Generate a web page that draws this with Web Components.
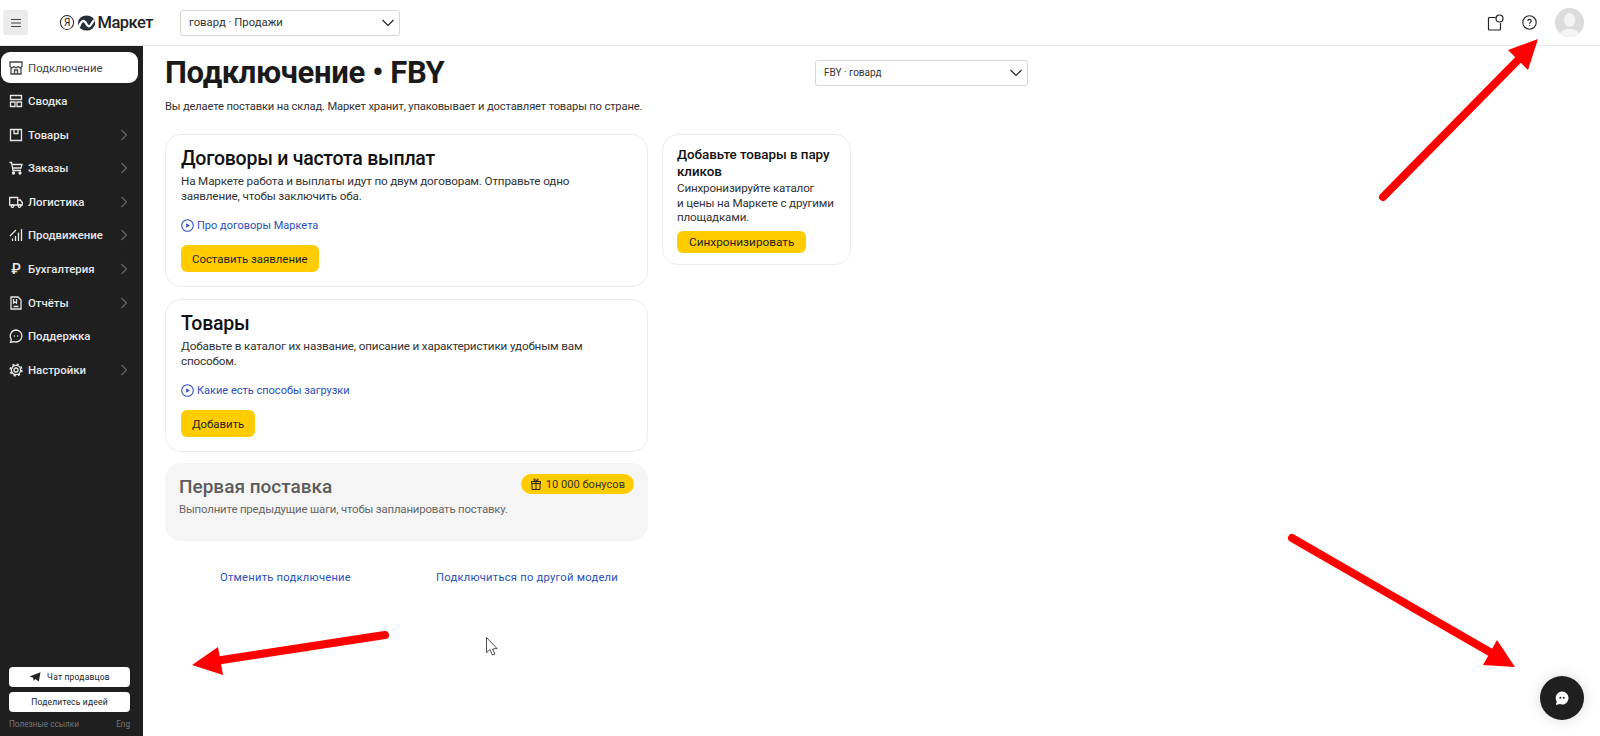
<!DOCTYPE html>
<html lang="ru">
<head>
<meta charset="utf-8">
<title>Подключение • FBY</title>
<style>
  html, body { margin: 0; height: 100%; }
  body { font-family: Roboto, "Liberation Sans", sans-serif; color: #1f1f1f; background: #fff; overflow: hidden; }
  .shell { display: flex; height: 690px; }
  .ic { display: block; width: 14px; height: 14px; fill: none; stroke: currentColor; stroke-width: 1.3; }
</style>
</head>
<body>
<script>
const define = (name, markup) => customElements.define(name, class extends HTMLElement {
  constructor() {
    super()
    this.attachShadow({ mode: 'open' })
    this.shadowRoot.innerHTML = markup
  }
})

define('y-select', `
<style>
  :host { display: block; box-sizing: border-box; height: 26px; border: 1px solid #d6d6d6; border-radius: 3px; background: #fff; }
  div { display: flex; align-items: center; justify-content: space-between; height: 100%; padding: 0 4px 0 8px; font-size: var(--select-size, 10px); color: #333; }
</style>
<div><slot></slot><svg width="14" height="14" viewBox="0 0 14 14" fill="none" stroke="#222" stroke-width="1.2"><path d="M1.5 4 7 9.5 12.5 4"/></svg></div>`)

define('y-logo', `
<style>
  :host { display: flex; align-items: center; width: 93px; }
  .ya { box-sizing: border-box; width: 15px; height: 15px; border: 1.2px solid #222; border-radius: 50%; font-size: 10px; line-height: 13px; text-align: center; color: #222; margin-right: 4px; }
  b { font-size: 16.5px; font-weight: 500; color: #222; margin-left: 2px; letter-spacing: -.5px; }
  svg { display: block; }
</style>
<span class="ya">Я</span>
<svg width="18" height="16" viewBox="0 0 18 16"><ellipse cx="9" cy="8" rx="9" ry="8" fill="#26303a"/><path d="M1 12.5C3 6 5.5 4.5 7.5 7s3 5.5 5 4 2.5-4.5 4.5-6" fill="none" stroke="#fff" stroke-width="2.4"/></svg>
<b>Маркет</b>`)

define('app-header', `
<style>
  :host { display: flex; align-items: center; box-sizing: border-box; height: 46px; padding: 0 16px 0 3px; border-bottom: 1px solid #e9e9e9; --select-size: 11.3px; }
  .burger { display: flex; align-items: center; justify-content: center; width: 25px; height: 25px; border-radius: 3px; background: #ebebeb; margin-right: 32px; }
  y-logo { margin-right: 27px; }
  y-select { width: 220px; }
  .tools { display: flex; align-items: center; margin-left: auto; }
  .tools svg { display: block; }
  .ava { width: 29px; height: 29px; margin-left: 18px; border-radius: 50%; overflow: hidden; }
</style>
<div class="burger"><svg width="12" height="10" viewBox="0 0 12 10" stroke="#444" stroke-width="1.2"><path d="M1 1.5h10M1 5h10M1 8.5h10"/></svg></div>
<y-logo></y-logo>
<y-select>говард · Продажи</y-select>
<div class="tools">
  <svg style="margin-right:18px" width="17" height="17" viewBox="0 0 17 17" fill="none" stroke="#222" stroke-width="1.2"><path d="M8.5 3.5H2.5a1 1 0 0 0-1 1V15a1 1 0 0 0 1 1H12.500a1 1 0 0 0 1-1V9"/><circle cx="12.500" cy="4.500" r="3.500"/></svg>
  <svg width="15" height="15" viewBox="0 0 15 15" fill="none" stroke="#222" stroke-width="1.1"><circle cx="7.5" cy="7.5" r="6.7"/><path d="M5.800 6c0-2.200 3.500-2.200 3.500 0 0 1.300-1.700 1.300-1.700 2.700"/><path d="M7.600 10v1.100"/></svg>
  <svg class="ava" viewBox="0 0 29 29"><rect width="29" height="29" fill="#dcdcdc"/><ellipse cx="14.5" cy="12" rx="5.5" ry="7" fill="#f4f4f4"/><path d="M4 29c1-7 6-8 10.500-8S24 22 25 29z" fill="#f4f4f4"/></svg>
</div>`)

define('nav-item', `
<style>
  :host { display: flex; align-items: center; box-sizing: border-box; height: 31px; padding: 0 15px 0 9px; color: #e8e8e8; font-size: 11.4px; font-weight: 500; }
  :host([active]) { background: #fff; color: #444; font-weight: 400; margin: 0 5px 0 1px; padding: 0 8px; border-radius: 9px; }
  .i { display: flex; width: 14px; height: 14px; margin-right: 5px; justify-content: center; align-items: center; font-size: 14px; }
  .t { flex: 1; }
  svg { display: none; }
  :host([arrow]) svg { display: block; }
</style>
<span class="i"><slot name="icon"></slot></span><span class="t"><slot></slot></span>
<svg width="8" height="12" viewBox="0 0 8 12" fill="none" stroke="#6a6a6a" stroke-width="1.1"><path d="M1.5 1 6.5 6 1.5 11"/></svg>`)

define('side-nav', `
<style>
  :host { display: flex; flex-direction: column; box-sizing: border-box; flex: none; width: 143px; padding-top: 6px; background: #1f1f1f; }
  .items { display: flex; flex-direction: column; gap: 2.6px; }
  .bottom { display: flex; flex-direction: column; margin-top: auto; padding: 0 13px 3px 9px; gap: 5px; }
  .btn { display: flex; align-items: center; justify-content: center; gap: 6px; height: 20px; border-radius: 4px; background: #fff; color: #222; font-size: 8.5px; letter-spacing: .2px; }
  .foot { display: flex; justify-content: space-between; margin-top: -2px; font-size: 8.2px; line-height: 18px; color: #777; }
</style>
<div class="items"><slot></slot></div>
<div class="bottom">
  <div class="btn"><svg width="12" height="10" viewBox="0 0 12 10"><path d="M11.5.3 9.8 9.5 6.3 7 4.5 8.800l-.3-3L.5 4.500z" fill="#222"/></svg>Чат продавцов</div>
  <div class="btn">Поделитесь идеей</div>
  <div class="foot"><span>Полезные ссылки</span><span>Eng</span></div>
</div>`)

define('play-link', `
<style>
  :host { display: flex; align-items: center; gap: 3px; height: 16px; color: #2a4fbd; font-size: 11px; }
</style>
<svg width="13" height="13" viewBox="0 0 13 13" fill="none" stroke="#2a4fbd" stroke-width="1.1"><circle cx="6.5" cy="6.5" r="5.8"/><path d="M5.2 4.200 8.800 6.500 5.200 8.800z" fill="#2a4fbd" stroke="none"/></svg><slot></slot>`)

define('text-link', `
<style>
  :host { display: block; color: #2a4fbd; font-size: 11.2px; line-height: 15px; letter-spacing: .24px; white-space: nowrap; }
</style>
<slot></slot>`)

define('y-button', `
<style>
  :host { display: inline-flex; align-items: center; justify-content: center; box-sizing: border-box; height: 27px; padding: 0 11px; border-radius: 6px; background: #fc0; color: #1f1f1f; font-size: 11.4px; }
</style>
<slot></slot>`)

define('step-card', `
<style>
  :host { display: block; box-sizing: border-box; height: 153px; padding: 12px 15px 11px; border: 1px solid #ececec; border-radius: 16px; background: #fff; }
  h2 { margin: 0 0 3px; font-size: 19.5px; font-weight: 500; line-height: 24px; letter-spacing: -.24px; color: #111; }
  p { margin: 0 0 14px; width: 405px; font-size: 11.7px; line-height: 14.5px; letter-spacing: -.16px; color: #333; }
  y-button { margin-top: 12px; }
</style>
<h2><slot name="title"></slot></h2>
<p><slot name="text"></slot></p>
<slot name="link"></slot>
<y-button><slot name="action"></slot></y-button>`)

define('bonus-badge', `
<style>
  :host { display: flex; align-items: center; gap: 4px; box-sizing: border-box; height: 20px; padding: 0 9px; border-radius: 10px; background: #fc0; color: #333; font-size: 11.1px; }
</style>
<svg width="12" height="12" viewBox="0 0 12 12" fill="none" stroke="#222" stroke-width="1"><path d="M1.500 3.500h9v2h-9zM2 5.500h8v6H2zM6 3.500v8M6 3.500C4 3.500 3 1 4.500 1S6 3.500 6 3.500 7 1 7.500 1C9 1 8 3.500 6 3.500"/></svg><slot></slot>`)

define('locked-card', `
<style>
  :host { display: block; box-sizing: border-box; height: 78px; margin-top: -1px; padding: 12px 14px 0; border-radius: 16px; background: #f5f5f5; color: #666; }
  .row { display: flex; align-items: flex-start; justify-content: space-between; }
  h2 { margin: 0 0 4px; font-size: 19px; font-weight: 500; line-height: 23px; color: #5c5c5c; }
  p { margin: 0; font-size: 11.4px; line-height: 15px; letter-spacing: -.16px; }
  bonus-badge { margin-top: -1px; }
</style>
<div class="row"><h2><slot name="title"></slot></h2><bonus-badge><slot name="bonus"></slot></bonus-badge></div>
<p><slot name="text"></slot></p>`)

define('sync-card', `
<style>
  :host { display: block; box-sizing: border-box; width: 189px; height: 131px; padding: 11px 14px; border: 1px solid #ececec; border-radius: 16px; background: #fff; }
  h3 { margin: 0 0 1px; font-size: 13.4px; font-weight: 500; line-height: 17px; letter-spacing: -.05px; color: #111; }
  p { margin: 0 0 6px; font-size: 11.6px; line-height: 14.5px; letter-spacing: -.16px; color: #333; }
  y-button { height: 22px; padding: 0 12px; font-size: 11.8px; }
</style>
<h3><slot name="title"></slot></h3>
<p><slot name="text"></slot></p>
<y-button><slot name="action"></slot></y-button>`)

define('connect-page', `
<style>
  :host { display: block; flex: 1; padding: 7px 0 0 22px; }
  .head { display: flex; align-items: center; justify-content: space-between; width: 863px; height: 40px; }
  h1 { margin: 0; font-size: 31px; font-weight: 700; line-height: 40px; letter-spacing: -.35px; color: #1a1a1a; }
  y-select { width: 213px; margin-top: -1px; --select-size: 10px; }
  .lead { margin: 5px 0 0; font-size: 11.2px; line-height: 18px; letter-spacing: -.16px; color: #333; }
  .cols { display: flex; align-items: flex-start; gap: 14px; margin-top: 18px; }
  .col { display: flex; flex-direction: column; gap: 12px; width: 483px; }
  .links { display: flex; gap: 85px; padding: 17px 0 0 55px; }
</style>
<div class="head"><h1><slot name="title"></slot></h1><y-select><slot name="model"></slot></y-select></div>
<p class="lead"><slot name="lead"></slot></p>
<div class="cols">
  <div class="col"><slot name="steps"></slot><div class="links"><slot name="links"></slot></div></div>
  <slot name="aside"></slot>
</div>`)

define('chat-fab', `
<style>
  :host { position: fixed; right: 16px; bottom: 16px; display: flex; align-items: center; justify-content: center; width: 44px; height: 44px; border-radius: 50%; background: #1f1f1f; box-shadow: 0 0 14px rgba(0,0,0,.14); }
</style>
<svg width="16" height="16" viewBox="0 0 16 16"><path d="M8 1.500a6.500 6.500 0 1 1-2.200 12.600L2 15l.7-3.600A6.500 6.500 0 0 1 8 1.500z" fill="#fff"/><circle cx="6.300" cy="7.800" r="1" fill="#1f1f1f"/><circle cx="9.700" cy="7.800" r="1" fill="#1f1f1f"/></svg>`)

define('red-arrows', `
<style>
  :host { position: fixed; inset: 0; pointer-events: none; }
  svg { display: block; }
</style>
<svg width="1600" height="736" viewBox="0 0 1600 736">
  <g stroke="#f00" stroke-width="8" stroke-linecap="round" fill="none">
    <path d="M1383 197 1518 60"/>
    <path d="M1292 538 1495 655"/>
    <path d="M385 635 215 661"/>
  </g>
  <path d="M1538 39 1508 50 1528 70z M1515 667 1497 640 1483 665z M192 665 218 647 223 675z" fill="#f00"/>
  <path d="M486.500 637.500v15l3.500-3 2.500 5.500 2.500-1-2.500-5 4.500-.5z" fill="#fff" stroke="#222" stroke-width=".8"/>
</svg>`)
</script>

<app-header></app-header>
<div class="shell">
  <side-nav>
    <nav-item active><svg slot="icon" class="ic" viewBox="0 0 14 14"><path d="M1 1h12v4.500L11 7 9 5.500 7 7 5 5.500 3 7 1 5.500zM2 6.500V13h10V6.500M5.500 13V9h3v4"/></svg>Подключение</nav-item>
    <nav-item><svg slot="icon" class="ic" viewBox="0 0 14 14"><path d="M1.500 1.500h11v4h-11zM1.500 8h4.500v4.500H1.500zM8 8h4.500v4.500H8z"/></svg>Сводка</nav-item>
    <nav-item arrow><svg slot="icon" class="ic" viewBox="0 0 14 14"><path d="M1.500 1.500h11v11h-11zM5 1.500v4h4v-4"/></svg>Товары</nav-item>
    <nav-item arrow><svg slot="icon" class="ic" viewBox="0 0 14 14"><path d="M.5 1.500h2L4 9.500h8M3 3.500h10l-1 3.500H3.600"/><circle cx="4.500" cy="12" r="1" fill="currentColor"/><circle cx="11" cy="12" r="1" fill="currentColor"/></svg>Заказы</nav-item>
    <nav-item arrow><svg slot="icon" class="ic" viewBox="0 0 14 14"><path d="M.7 2.500h8v7.500h-8zM8.700 5h2.600l2 2.500V10H8.700"/><circle cx="3.500" cy="11" r="1.300"/><circle cx="10.500" cy="11" r="1.300"/></svg>Логистика</nav-item>
    <nav-item arrow><svg slot="icon" class="ic" viewBox="0 0 14 14"><path d="M12.500 1v12M9.500 4.500V13M6.500 8v5M3.500 10.500V13M1 8l6-6"/></svg>Продвижение</nav-item>
    <nav-item arrow><span slot="icon">₽</span>Бухгалтерия</nav-item>
    <nav-item arrow><svg slot="icon" class="ic" viewBox="0 0 14 14"><path d="M2 1h7l3 3v9H2zM4.500 10.500h5M4.500 3v4l1.500-1 1.500 1V3"/></svg>Отчёты</nav-item>
    <nav-item><svg slot="icon" class="ic" viewBox="0 0 14 14"><path d="M7 1a6 6 0 1 1-2 11.700L1.500 13.500l.8-3.200A6 6 0 0 1 7 1zM4.800 7h1M8.200 7h1"/></svg>Поддержка</nav-item>
    <nav-item arrow><svg slot="icon" class="ic" viewBox="0 0 14 14"><circle cx="7" cy="7" r="2"/><circle cx="7" cy="7" r="4.600"/><circle cx="7" cy="7" r="5.800" stroke-width="1.600" stroke-dasharray="2.200 2.360"/></svg>Настройки</nav-item>
  </side-nav>
  <connect-page>
    <span slot="title">Подключение • FBY</span>
    <span slot="model">FBY · говард</span>
    <span slot="lead">Вы делаете поставки на склад. Маркет хранит, упаковывает и доставляет товары по стране.</span>
    <step-card slot="steps">
      <span slot="title">Договоры и частота выплат</span>
      <span slot="text">На Маркете работа и выплаты идут по двум договорам. Отправьте одно заявление, чтобы заключить оба.</span>
      <play-link slot="link">Про договоры Маркета</play-link>
      <span slot="action">Составить заявление</span>
    </step-card>
    <step-card slot="steps">
      <span slot="title">Товары</span>
      <span slot="text">Добавьте в каталог их название, описание и характеристики удобным вам способом.</span>
      <play-link slot="link">Какие есть способы загрузки</play-link>
      <span slot="action">Добавить</span>
    </step-card>
    <locked-card slot="steps">
      <span slot="title">Первая поставка</span>
      <span slot="bonus">10 000 бонусов</span>
      <span slot="text">Выполните предыдущие шаги, чтобы запланировать поставку.</span>
    </locked-card>
    <text-link slot="links">Отменить подключение</text-link>
    <text-link slot="links">Подключиться по другой модели</text-link>
    <sync-card slot="aside">
      <span slot="title">Добавьте товары в пару кликов</span>
      <span slot="text">Синхронизируйте каталог<br>и цены на Маркете с другими площадками.</span>
      <span slot="action">Синхронизировать</span>
    </sync-card>
  </connect-page>
</div>
<chat-fab></chat-fab>
<red-arrows></red-arrows>
</body>
</html>
